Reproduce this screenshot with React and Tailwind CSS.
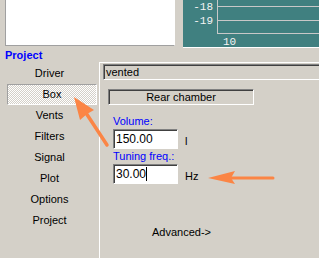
// Box settings panel
const navItems = ["Driver", "Box", "Vents", "Filters", "Signal", "Plot", "Options", "Project"];

function Chart() {
    return (
        <svg width="136" height="47" className="block">
            <line x1="34" y1="6.5" x2="136" y2="6.5" stroke="#c8c8c8" />
            <line x1="34" y1="20.5" x2="136" y2="20.5" stroke="#c8c8c8" />
            <line x1="34" y1="33.5" x2="136" y2="33.5" stroke="#c8c8c8" />
            <line x1="34.5" y1="0" x2="34.5" y2="34" stroke="#c8c8c8" />
            <text x="30" y="10" fill="#f4f4f4" fontSize="11" textAnchor="end" fontFamily="Liberation Mono, monospace">-18</text>
            <text x="30" y="24" fill="#f4f4f4" fontSize="11" textAnchor="end" fontFamily="Liberation Mono, monospace">-19</text>
            <text x="40" y="45" fill="#f4f4f4" fontSize="11" fontFamily="Liberation Mono, monospace">10</text>
        </svg>
    );
}

function Arrows() {
    return (
        <svg width="319" height="258" className="absolute left-0 top-0 pointer-events-none">
            <line x1="86" y1="113" x2="107" y2="145" stroke="#fb8545" strokeWidth="3.5" strokeLinecap="round" />
            <polygon points="74,97 94,110 87,114 80,120" fill="#fb8545" />
            <line x1="231" y1="178" x2="273" y2="178" stroke="#fb8545" strokeWidth="3" strokeLinecap="round" />
            <polygon points="208,178 235,171 231,178 235,184" fill="#fb8545" />
        </svg>
    );
}

function Field({ label, value, unit, cursor }) {
    return (
        <div className="ml-[13px]">
            <div className="text-[11px] leading-[13px] text-[#0000ff]">{label}</div>
            <div className="flex items-end mt-[1px]">
                <div className="w-[65px] h-[20px] bg-white border border-t-[#808080] border-l-[#808080] border-b-white border-r-white shadow-[inset_1px_1px_0_#404040] flex items-center pl-[2px] text-[12px]">
                    {value}
                    {cursor && <span className="inline-block w-px h-[14px] bg-black" />}
                </div>
                <span className="ml-[7px] text-[11px] leading-[13px] mb-[1px]">{unit}</span>
            </div>
        </div>
    );
}

function App() {
    return (
        <div className="relative w-[319px] h-[258px] overflow-hidden bg-[#d4d0c8] text-black font-['Liberation_Sans',sans-serif]">
            <div className="flex h-[48px] pl-[5px]">
                <div className="w-[170px] h-[46px] bg-white border-l border-b border-[#a0a0a0] border-r border-r-white" />
                <div className="ml-[8px] flex-1 bg-[#408080] border-b border-white">
                    <Chart />
                </div>
            </div>
            <div className="h-[14px] pl-[5px] text-[11px] leading-[14px] font-bold text-[#0000ff]">Project</div>

            <div className="flex h-[196px]">
                <div className="w-[99px] flex flex-col pt-[1px]">
                    {navItems.map((item) =>
                        item === "Box" ? (
                            <div key={item} className="ml-[7px] w-[90px] h-[21px] flex items-center justify-center text-[11px] border border-t-[#a0a0a0] border-l-[#a0a0a0] border-b-white border-r-white bg-[repeating-conic-gradient(#ffffff_0%_25%,#d4d0c8_0%_50%)] bg-[length:2px_2px]">
                                {item}
                            </div>
                        ) : (
                            <div key={item} className="h-[21px] flex items-center justify-center text-[11px]">
                                {item}
                            </div>
                        )
                    )}
                </div>

                <div className="flex-1 border-l border-t border-white overflow-hidden">
                    <div className="ml-[3px] mt-[1px] w-[240px] h-[16px] border border-t-[#808080] border-l-[#808080] border-b-white border-r-white shadow-[inset_1px_1px_0_#404040] flex items-center pl-[2px] text-[11px]">
                        vented
                    </div>
                    <div className="ml-[8px] mt-[9px] w-[146px] h-[16px] border border-t-[#808080] border-l-[#808080] border-b-white border-r-white shadow-[inset_1px_1px_0_#404040] flex items-center justify-center text-[11px]">
                        Rear chamber
                    </div>
                    <div className="mt-[10px]">
                        <Field label="Volume:" value="150.00" unit="l" />
                    </div>
                    <div className="mt-[1px]">
                        <Field label="Tuning freq.:" value="30.00" unit="Hz" cursor />
                    </div>
                    <div className="ml-[52px] mt-[40px] text-[11px]">Advanced-&gt;</div>
                </div>
            </div>

            <Arrows />
        </div>
    );
}

export default App;
